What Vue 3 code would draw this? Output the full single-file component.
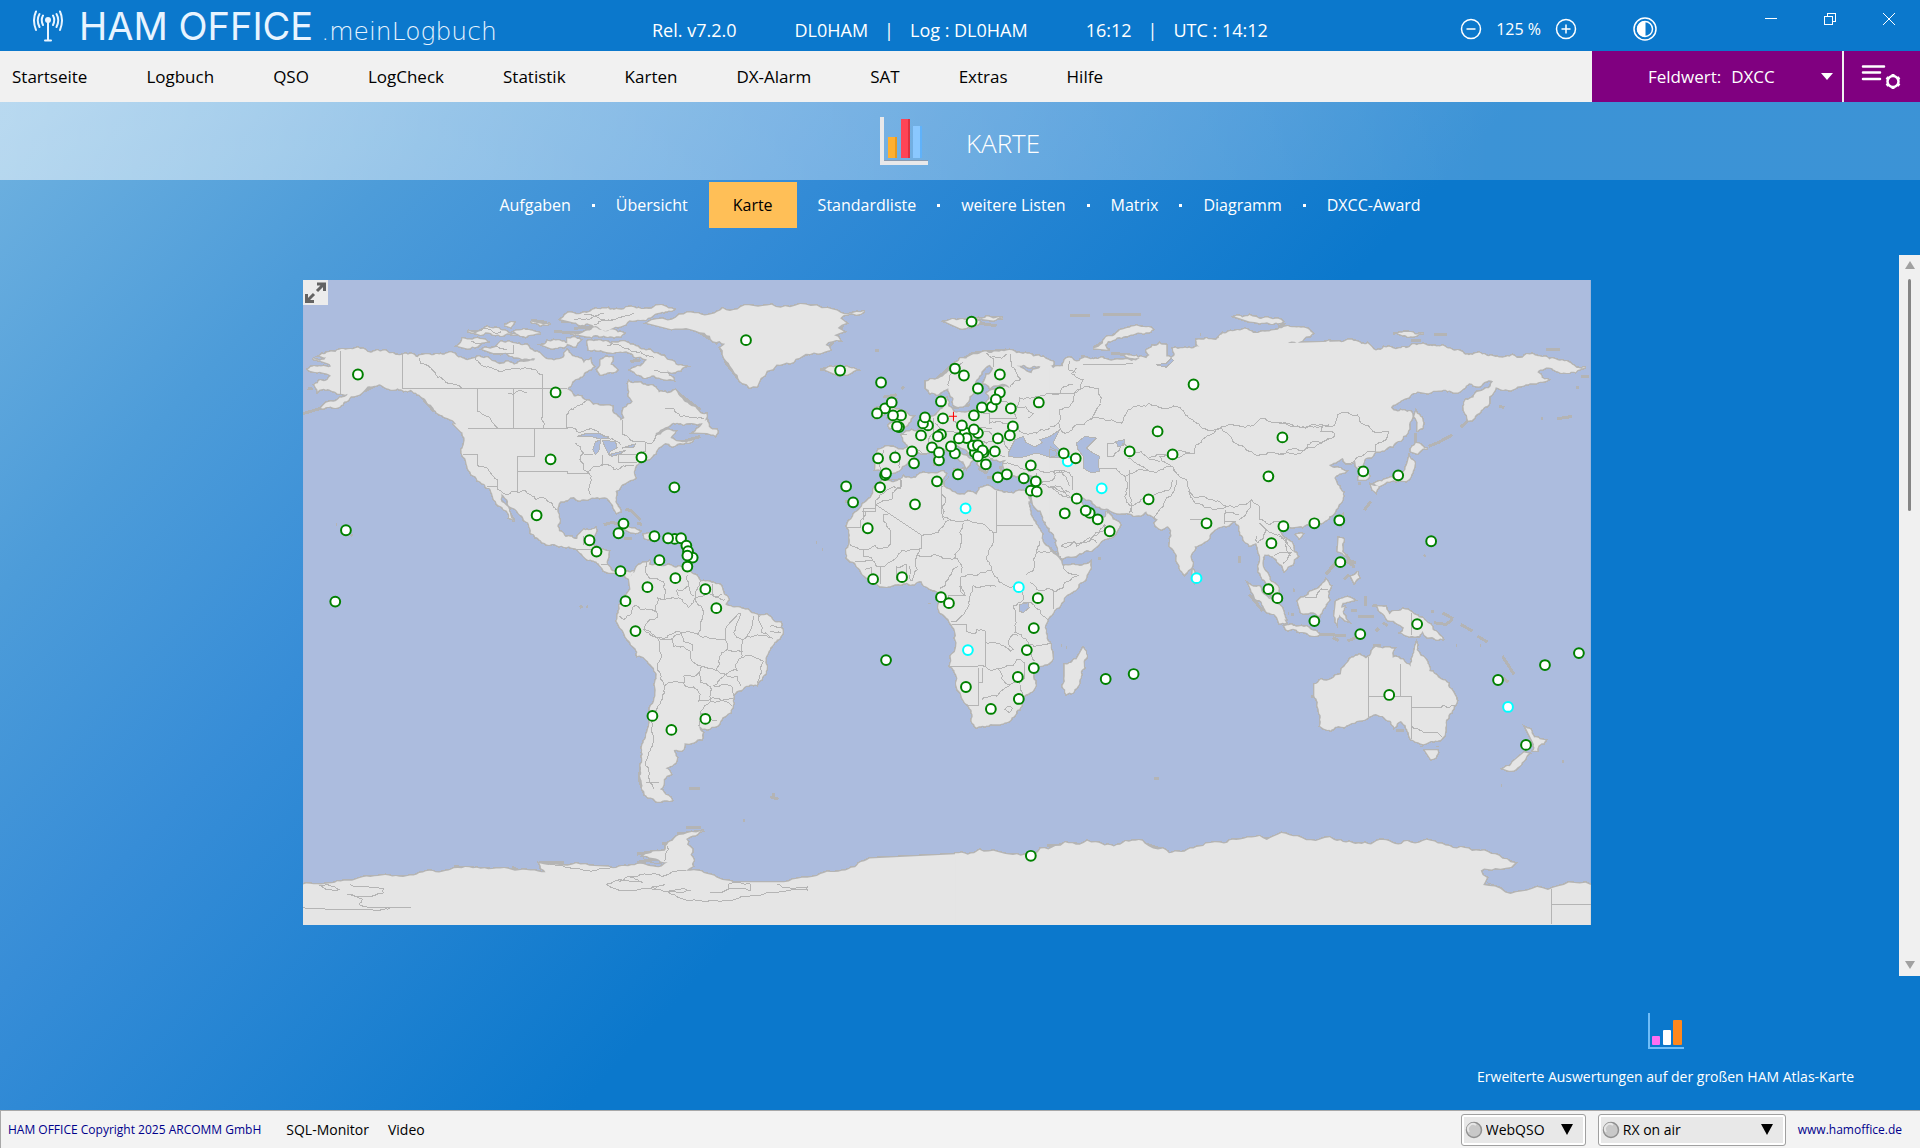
<template>
  <div class="app">
    <header class="titlebar">
      <div class="brand">
        <svg class="brand-icon" width="30" height="32" viewBox="0 0 30 32" fill="none" stroke="#e8f4ff" stroke-width="2" stroke-linecap="round">
          <circle cx="15" cy="10" r="3" fill="#e8f4ff" stroke="none"/>
          <path d="M15 12V30M12 30.500H18"/>
          <path d="M10 5.500Q7.500 10 10 15M20 5.500Q22.500 10 20 15M6.500 4Q3 10 6.500 17M23.500 4Q27 10 23.500 17M3 1.500Q-1 10 3 20M27 1.500Q31 10 27 20"/>
        </svg>
        <span class="brand-name">HAM OFFICE</span>
        <span class="brand-sub">.meinLogbuch</span>
      </div>
      <div class="info">
        <span>Rel. v7.2.0</span>
        <span class="info-group"><span>DL0HAM</span><span>|</span><span>Log : DL0HAM</span></span>
        <span class="info-group"><span>16:12</span><span>|</span><span>UTC : 14:12</span></span>
      </div>
      <div class="zoom">
        <button class="icon-btn" aria-label="Verkleinern">
          <svg width="22" height="22" viewBox="0 0 22 22" fill="none" stroke="#fff" stroke-width="1.500"><circle cx="11" cy="11" r="9.500"/><path d="M6.500 11H15.500"/></svg>
        </button>
        <span>125 %</span>
        <button class="icon-btn" aria-label="Vergrößern">
          <svg width="22" height="22" viewBox="0 0 22 22" fill="none" stroke="#fff" stroke-width="1.500"><circle cx="11" cy="11" r="9.500"/><path d="M6.500 11H15.500M11 6.500V15.500"/></svg>
        </button>
      </div>
      <button class="icon-btn contrast" aria-label="Kontrast">
        <svg width="24" height="24" viewBox="0 0 24 24" fill="none" stroke="#fff"><circle cx="12" cy="12" r="11" stroke-width="1.500"/><circle cx="12" cy="12" r="7.500" stroke-width="1.500"/><path d="M12 4.500A7.500 7.500 0 0 0 12 19.500Z" fill="#fff"/></svg>
      </button>
      <div class="window-buttons">
        <button class="icon-btn" aria-label="Minimieren">
          <svg width="14" height="14" viewBox="0 0 14 14" stroke="#fff" shape-rendering="crispEdges"><path d="M1 6.500H13"/></svg>
        </button>
        <button class="icon-btn" aria-label="Wiederherstellen">
          <svg width="14" height="14" viewBox="0 0 14 14" fill="none" stroke="#fff" shape-rendering="crispEdges"><path d="M1.500 4.500H9.500V12.500H1.500ZM4.500 4.500V1.500H12.500V9.500H9.500"/></svg>
        </button>
        <button class="icon-btn" aria-label="Schließen">
          <svg width="14" height="14" viewBox="0 0 14 14" fill="none" stroke="#fff"><path d="M1 1L13 13M13 1L1 13"/></svg>
        </button>
      </div>
    </header>

    <div class="menubar">
      <nav class="menu">
        <a v-for="item in menu" :key="item" href="#">{{ item }}</a>
      </nav>
      <div class="field">
        <label for="feldwert">Feldwert:</label>
        <select id="feldwert"><option>DXCC</option></select>
        <svg class="field-arrow" width="12" height="7" viewBox="0 0 12 7"><path d="M0 0H12L6 7Z" fill="#fff"/></svg>
      </div>
      <button class="settings" aria-label="Einstellungen">
        <svg width="42" height="28" viewBox="0 0 42 28" fill="none" stroke="#fff">
          <path d="M2 3.500H23M2 9.500H19M2 16H19" stroke-width="2.500" stroke-linecap="round"/>
          <circle cx="32" cy="18.500" r="5.500" stroke-width="2.500"/>
          <path d="M32 11V13M32 24V26M25.500 14.500L27 15.500M38.500 14.500L37 15.500M25.500 22.500L27 21.500M38.500 22.500L37 21.500" stroke-width="3"/>
        </svg>
      </button>
    </div>

    <main class="page">
      <div class="heading">
        <svg width="48" height="48" viewBox="0 0 48 48">
          <path d="M0 0H4V44H48V48H0Z" fill="#e8e8ea"/>
          <path d="M4 43.500H48" stroke="#8a9bb0"/>
          <rect x="8" y="20" width="9" height="21" fill="#ffb031"/>
          <rect x="15" y="20" width="2" height="21" fill="#e8991f"/>
          <rect x="21" y="2" width="9" height="39" fill="#ff4456"/>
          <rect x="28" y="2" width="2" height="39" fill="#e0303f"/>
          <rect x="33" y="9" width="9" height="32" fill="#8ac8ff"/>
          <rect x="40" y="9" width="2" height="32" fill="#5fb2fb"/>
        </svg>
        <h1>KARTE</h1>
      </div>

      <nav class="tabs">
        <template v-for="(tab, i) in tabs" :key="tab">
          <span v-if="i > 0 && tab !== activeTab && tabs[i - 1] !== activeTab" class="dot"></span>
          <a href="#" class="tab" :class="{ active: tab === activeTab }" @click.prevent="activeTab = tab">{{ tab }}</a>
        </template>
      </nav>

      <div class="viewport">
        <div class="content">
          <div class="map">
            <svg class="world" viewBox="0 0 1290 646" role="img" aria-label="Weltkarte">
              <rect width="1290" height="646" class="sea"/>
              <g v-for="(t, i) in shapes" :key="'c' + i" :transform="place(t)">
                <path class="coast" :d="t.land"/>
                <path v-if="t.isles" class="isles" :d="t.isles"/>
              </g>
              <g v-for="(t, i) in shapes" :key="'l' + i" :transform="place(t)">
                <path class="land" :d="t.land"/>
              </g>
              <g v-for="(t, i) in shapes" :key="'b' + i" :transform="place(t)">
                <path v-if="t.lakes" class="lake" :d="t.lakes"/>
                <path v-if="t.borders" class="border" :d="t.borders"/>
              </g>
              <path class="home" d="M647 136.500H655M651.500 132V141"/>
              <circle
                v-for="(m, i) in markers"
                :key="'m' + i"
                class="marker"
                :class="{ open: m.open }"
                :cx="m.x"
                :cy="m.y"
                r="4.900"
              />
            </svg>
            <button class="expand" aria-label="Vollbild">
              <svg width="25" height="25" viewBox="0 0 25 25" fill="none" stroke="#636363" stroke-width="3"><path d="M14 11L21 4M14 4H21.500V11M11 14L4 21M3.500 14V21.500H11"/></svg>
            </button>
          </div>
        </div>
        <div class="scrollbar">
          <svg width="10" height="8" viewBox="0 0 10 8"><path d="M5 0L10 8H0Z" fill="#a0a0a0"/></svg>
          <div class="track"><div class="thumb"></div></div>
          <svg width="10" height="8" viewBox="0 0 10 8"><path d="M0 0H10L5 8Z" fill="#a0a0a0"/></svg>
        </div>
      </div>

      <div class="atlas">
        <button class="atlas-btn">
          <svg width="36" height="36" viewBox="0 0 36 36">
            <path d="M1 0V35H36" fill="none" stroke="#6fbdf8" stroke-width="2"/>
            <rect x="4" y="23" width="8" height="9" rx="1" fill="#ff6ef2"/>
            <rect x="15" y="17" width="8" height="15" rx="1" fill="#fff"/>
            <rect x="25" y="7" width="9" height="25" rx="1" fill="#ff871c"/>
          </svg>
          <span>Erweiterte Auswertungen auf der großen HAM Atlas-Karte</span>
        </button>
      </div>
    </main>

    <footer class="statusbar">
      <span class="copyright">HAM OFFICE Copyright 2025 ARCOMM GmbH</span>
      <a href="#">SQL-Monitor</a>
      <a href="#">Video</a>
      <div class="status-right">
        <label v-for="box in statusBoxes" :key="box.name" class="status-box" :class="box.size">
          <svg width="18" height="18" viewBox="0 0 18 18"><circle cx="9" cy="9" r="7.500" fill="#c8c8c8" stroke="#8f8f8f" stroke-width="1.500"/><path d="M4 11A5 5 0 0 1 11 4" stroke="#e6e6e6" stroke-width="2" fill="none"/></svg>
          <select :aria-label="box.name"><option>{{ box.name }}</option></select>
          <svg class="status-arrow" width="12" height="11" viewBox="0 0 12 11"><path d="M0 0H12L6 11Z"/></svg>
        </label>
        <a class="site" href="#">www.hamoffice.de</a>
      </div>
    </footer>
  </div>
</template>

<script setup>
import { computed, ref } from 'vue'

const menu = ['Startseite', 'Logbuch', 'QSO', 'LogCheck', 'Statistik', 'Karten', 'DX-Alarm', 'SAT', 'Extras', 'Hilfe']
const tabs = ['Aufgaben', 'Übersicht', 'Karte', 'Standardliste', 'weitere Listen', 'Matrix', 'Diagramm', 'DXCC-Award']
const activeTab = ref('Karte')
const statusBoxes = [
  { name: 'WebQSO', size: 'small' },
  { name: 'RX on air', size: 'large' }
]

// Each tile has its own origin (x, y) on the map and its own scale
const tiles = [
  {
    // North America
    x: -2, y: -10, sx: 1 / 3, sy: 1 / 3,
    land: 'M35 265L70 270L75 262L55 258L90 245L140 238L200 246L270 250L350 262L365 255L400 255L440 250L520 265L560 262L590 280L640 285L680 275L700 272L730 262L760 272L790 262L800 240L830 262L850 280L870 268L880 290L850 310L815 335L800 358L820 380L860 392L900 408L935 410L940 432L960 452L972 445L970 415L997 395L985 360L985 335L1020 338L1060 350L1075 368L1100 370L1125 360L1145 385L1180 410L1218 432L1215 450L1150 465L1110 465L1080 480L1060 505L1100 480L1125 485L1110 505L1135 515L1180 510L1115 530L1095 520L1070 540L1055 560L1040 570L1005 590L1000 610L1005 625L975 640L945 665L945 685L960 725L948 730L932 700L920 685L890 682L860 690L820 682L780 695L770 725L770 770L775 785L795 802L830 808L850 780L885 775L885 790L870 820L895 838L925 845L920 885L935 905L960 912L1000 905L990 928L955 915L925 910L900 890L870 870L830 840L805 830L775 830L720 812L690 790L685 765L650 725L620 690L600 665L625 720L642 755L625 745L600 710L580 690L565 655L530 632L500 590L487 560L490 520L485 490L500 490L470 470L440 445L400 420L370 385L330 360L290 355L240 345L200 350L175 375L130 395L60 415L110 390L140 372L110 372L75 360L50 365L40 345L80 330L90 318L35 305L20 298L60 290L90 290L80 280ZM545 238L600 215L640 220L680 225L700 245L730 262L690 268L640 262L620 250L580 250ZM470 228L485 205L545 208L560 215L530 230L500 236ZM725 225L760 210L800 220L790 232L750 235ZM860 215L900 212L960 215L1000 225L1050 240L1100 270L1155 290L1140 302L1100 300L1120 330L1080 325L1010 315L990 300L1020 290L1040 270L1000 260L960 245L900 240L865 240ZM780 148L820 130L870 125L940 120L1000 112L1060 112L1120 118L1080 128L1020 150L960 170L900 178L860 160L820 158ZM810 190L900 180L970 190L960 200L860 200ZM500 182L560 170L650 190L600 198L540 195ZM610 165L640 158L630 172ZM690 155L750 160L740 165ZM640 185L680 180L720 190L660 198ZM800 205L840 210L825 230L800 222ZM890 300L900 270L935 262L930 285L950 300L920 308L900 315ZM1180 488L1200 470L1220 450L1225 470L1250 480L1245 498L1220 490ZM455 460L500 480L505 495L480 485Z',
    isles: 'M340 362L375 372L425 412L460 450L500 490M350 368L400 425M780 155L900 150L1000 135M820 175L900 170M500 185L600 180M690 150L740 158M760 185L960 195M990 275L1020 270M5 432L110 400M20 355L35 358M1115 525L1200 500M570 665L640 750M165 375L230 345M1120 360L1200 420M105 766h4M150 795l5 4',
    lakes: 'M830 500L860 490L900 492L925 505L900 508L870 500ZM885 515L900 512L895 545L885 555L877 540ZM905 512L945 515L950 535L930 545L925 555L915 535ZM925 555L975 542L960 552L935 560ZM965 535L1005 522L1000 532Z',
    borders: 'M118 242V372M305 252V357H800M355 265L360 280L385 290L400 305L430 330L460 345L487 357M525 258V270L620 300L725 313V430L730 475M530 358V425L570 448L592 475M637 358V475M622 372L650 364L680 367M503 475H800L840 488L880 480L905 495L940 510L960 525M797 475V437L860 393M965 452V495L1000 515L1055 520L1085 485M703 475V561H650V667M486 553H530V585L590 630V660L650 667L675 662L705 690L730 685L768 722M560 652H590M650 604H802V610H862M825 520L850 550L838 570L850 600L872 630L870 675M862 605L885 590L905 585L940 600L965 590L1000 588M907 555V590M850 555H877M955 580V553H1010L1035 545V520M955 577H1010M637 225V250H565M1095 415H1120L1140 440L1210 445M848 800V825M830 840H870M900 885H925M820 150L880 140L940 150L1000 130M850 135L910 130M880 165L950 145M570 232L620 240M510 215L540 222M920 228L980 235L1060 262M1060 300L1110 312M520 188L600 186',
    markers: [[171, 314], [765, 368], [750, 569], [1023, 563], [1122, 653], [708, 737], [135, 782]]
  },
  {
    // Greenland
    x: -302, y: -280, sx: 1920 / 1568, sy: 1148 / 938,
    land: 'M528 264L536 261L545 262L558 257L570 256L590 252L602 253L615 250L630 249L645 251L662 250L680 253L706 254L692 257L686 260L691 264L684 268L689 271L681 274L686 278L674 282L678 286L668 289L655 291L645 297L634 298L626 303L621 309L618 316L612 317L606 313L600 305L596 299L593 295L588 284L592 281L582 279L575 272L560 268L548 269Z',
    isles: 'M588 284L593 297L603 310L614 317M690 262L684 274L676 285L650 292M565 268L586 281',
    markers: [[609, 278], [273, 492]]
  },
  {
    // South America
    x: 238, y: 220, sx: 1 / 3, sy: 1 / 3,
    land: 'M265 235L285 210L300 195L330 182L325 195L345 195L370 200L405 205L440 210L460 225L480 245L520 250L545 265L565 300L555 315L600 325L640 342L680 345L700 365L722 370L727 390L710 420L685 455L680 500L665 540L650 557L610 565L580 590L577 620L555 650L530 680L500 690L475 680L488 700L485 720L460 730L432 732L430 750L400 752L410 775L395 800L375 808L392 825L370 840L358 870L370 880L395 903L365 905L330 895L305 870L298 830L305 790L305 740L320 700L330 650L345 590L347 520L330 495L290 470L270 430L245 390L228 365L235 340L250 300L270 270ZM240 82L265 84L298 95L270 98ZM310 105L355 108L350 116L312 115Z',
    isles: 'M190 76L215 68L240 76M252 118h22M255 28L275 35L300 60M290 70L305 75M445 868H478M690 893L715 900M118 318l6 8M138 320l4 3M302 790L296 840L312 885L370 908M310 800L304 850L340 895M828 128h3M846 151h3',
    borders: 'M320 187L315 210L325 235L370 245L375 280L375 300L352 295L350 340L320 330L285 318L250 360L238 350M350 340V355L320 370L310 390L350 415L358 430L360 480L350 510L360 540L372 560L365 600L350 625L335 700L325 760L325 830L340 870M310 390L380 415L425 400L475 405L480 370L490 340L470 310L465 295L445 325L430 310L415 295L375 300M440 225L445 260L410 270L415 290M445 260L460 290M480 245L470 270L465 295L530 295L555 300M515 255L520 290L545 285M475 405L480 412L555 418L600 340M555 418L560 450L530 512L485 500L455 485L450 455L400 440L398 415L425 400M350 415L398 415M455 455V435L430 425L425 400M372 560L385 550L430 552L430 530L475 520L480 550L515 570L510 600L475 605L480 585L430 555M485 500L478 520M530 512L555 525L590 512L595 480L625 468L670 485L665 520L650 550M555 525L520 560L575 562L578 590M555 525L590 530L600 560M560 450L605 455L605 420L640 410L690 415M605 455L600 480M600 340L580 400L605 420M640 350L635 385L610 420M655 345L665 400L700 420M690 380L722 385M690 395L722 400M510 600L578 598M475 680L480 640L510 605L550 605L575 620M480 640L530 665M318 850H355',
    markers: [
      [249, 72], [234, 101], [147, 122], [168, 156], [240, 215], [342, 110], [403, 118], [383, 116], [422, 116],
      [438, 138], [443, 155], [457, 174], [441, 168], [357, 182], [441, 201], [405, 236], [321, 263], [255, 305],
      [495, 269], [528, 326], [285, 395], [336, 650], [393, 692], [495, 659]
    ]
  },
  {
    // Europe
    x: 518, y: 10, sx: 1 / 3, sy: 1 / 3,
    land: 'M318 275L345 270L380 250L400 225L420 205L455 195L500 185L560 182L590 190L640 200L700 215L700 225L650 230L610 225L590 228L620 245L635 250L640 240L670 225L700 235L730 230L740 205L770 215L840 205V620H640L635 600L640 560L620 555L590 560L560 550L550 520L560 510L540 515L500 500L510 530L500 545L480 530L465 500L440 480L410 465L400 455L395 465L420 490L460 510L450 520L440 535L430 515L400 495L370 475L345 480L320 490L295 485L285 495L265 515L240 540L200 550L165 540L175 480L190 475L250 480L265 470L245 435L260 425L290 425L310 400L340 380L370 355V330L380 325L385 350L400 365L440 368L480 360L500 340L510 325L500 310L520 300L570 295L560 285L510 295L490 280L500 255L520 235L510 225L490 240L475 265L465 280L460 310L445 335L420 350L400 345L390 310L385 295L350 315L330 310L318 295ZM15 240L40 232L70 232L110 240L90 250L50 255ZM375 95L420 88L450 85L480 95L470 105L420 115ZM470 85L550 85L520 92ZM205 325L225 330L215 345L235 360L260 370L278 380L270 395L255 410L210 415L205 408L225 395L205 385L220 365L200 350ZM160 360L195 355L190 375L165 385ZM400 540L430 537L425 548ZM345 500H358L355 525H345ZM350 480L356 478V495H350ZM595 558L615 553L605 562Z',
    isles: 'M345 272L400 222L460 190L560 180M318 280L320 300M375 95L480 85L550 82M480 100L530 108M0 240L20 235M190 322L230 315M245 298l8 -8M165 181H178M750 77H810M825 170h12M500 562H530M400 355L450 345M540 530L550 555M475 535L500 550M445 480L475 515M75 635H85M785 203h20',
    lakes: 'M565 490L585 450L610 440L618 458L645 472L668 458L660 450L690 440L720 420L700 460L720 480L735 500L700 505L650 490L600 505L565 500Z',
    borders: 'M500 190L520 205V232M570 192L575 230L602 268L570 292M515 200L545 205L560 192M430 215L400 240L385 290M590 350L600 325L690 310L720 312L735 290L760 285M750 215L745 240L770 250M540 330L565 340L580 355L590 385H510M480 365L510 370V400L580 405M590 350L640 370L625 385M590 410L600 425L650 430L690 415M400 368V395L425 405L460 420L515 415M340 385V430L325 460L345 478M345 400L370 430M370 430L440 435L500 425L525 440M265 475L320 490M190 482L185 545M225 480L240 535M245 435H260M430 455L500 460L555 455L565 480M440 490L500 500L540 495L555 500M550 520L650 540L700 545L740 545M690 470L730 490M740 500L760 520L780 515M530 605V690M185 570H240V592L165 635M165 635V658H130V690M365 590V650L370 690M385 560L365 590M650 550V590L700 570L705 545M690 590L750 620',
    markers: [
      [455, 95], [60, 242], [183, 278], [405, 236], [432, 257], [474, 296], [540, 254], [363, 335], [195, 356],
      [215, 338], [171, 371], [243, 377], [219, 377], [237, 412], [231, 410], [540, 308], [516, 351], [528, 329],
      [486, 353], [573, 356], [657, 338], [462, 377], [369, 386], [324, 407], [309, 401], [315, 383], [303, 437],
      [363, 434], [354, 440], [435, 428], [440, 445], [426, 407], [417, 446], [474, 430], [462, 419], [579, 410],
      [570, 437], [534, 446], [336, 473], [357, 512], [357, 488], [405, 491], [393, 470], [276, 485], [282, 521],
      [225, 503], [174, 506], [195, 556], [198, 551], [180, 593], [78, 590], [99, 638], [351, 575], [414, 554],
      [285, 644], [437, 656, 1], [465, 488], [459, 468], [474, 466], [491, 488], [488, 482], [474, 500],
      [525, 485], [498, 524], [534, 563], [561, 554], [633, 527], [612, 566], [648, 575], [633, 603], [651, 606],
      [744, 515, 1], [732, 491], [768, 506]
    ]
  },
  {
    // Africa and Arabia
    x: 538, y: 190, sx: 1 / 3, sy: 1 / 3,
    land: 'M130 25L150 35L190 20L260 10L310 5L318 12L305 30L310 50L330 60L360 75L410 75L420 55L450 50L480 65L520 72L555 65L565 75L570 95L552 85L580 150L600 180L608 215L630 240L660 270L670 290L700 285L752 278L745 310L710 360L660 410L630 440L620 460L630 520L638 560L635 575L600 590L580 610L582 660L550 680L545 710L515 745L480 765L410 775L395 755L395 730L375 700L362 670L350 620L330 590L332 560L350 520L335 465L300 430L298 400L300 370L265 355L245 335L200 340L120 350L80 325L60 300L45 280L20 265L18 240L28 225L20 170L40 135L80 95L100 70L105 50L125 35ZM575 80L580 50L590 0H690L700 70L715 90L740 130L770 145L800 140V125L815 150L842 165L820 200L780 220L720 250L665 267L650 225L610 150L580 105ZM730 535L742 560L720 630L700 670L680 675L668 650L675 620V585L710 570Z',
    isles: 'M775 267h10M270 400v3M665 528h3M678 534h3M22 265H45M630 235L660 265',
    lakes: 'M540 405L565 400L568 415L550 430L540 425Z',
    borders: 'M65 125H107V93M107 105L185 50V30M20 175H62V152L75 137V125M130 135L142 235L70 240M130 135H145M107 105L245 197L330 150L305 130L308 50M330 150L370 155L460 190V220L440 265L455 300L490 345L540 350M470 68V188H460M470 168H580M245 197V238L185 243L145 280L110 292L95 265L70 260V240L30 225M370 160L365 220L345 255L365 310M230 258L280 255L355 265M240 240L230 258L232 300L215 335M355 290L325 330L300 360M455 300L410 318L365 320L360 350L375 378H325V390M360 345L375 375M470 350L400 348L390 390L380 420L350 455H332M337 465H380V485L410 490V480L437 485V590M330 590H415L490 595L530 570L555 580M437 520L500 535L512 545L520 540L505 515L520 495L535 500M415 597V710H380M415 640H427V597M427 690L470 680L510 645L475 600M510 645L540 640L550 680M555 580V625L535 640M535 350L550 390L520 410L525 490L560 510L570 550L585 575M570 340L590 360L650 365L715 318L670 290M560 315L590 250L650 245L665 270M640 365V420M550 400H575L625 450M565 525L635 520M600 215L590 250M170 330V292L200 285V335M210 290L215 335M120 292V345M45 275L100 275M75 300L95 295V320M495 720L505 710L517 716L509 730ZM665 230L700 220L750 205L770 220M760 200L800 165M590 40L660 75L700 80M660 0L690 50M870 0V80L880 130',
    markers: [
      [83, 176], [99, 329], [186, 323], [303, 383], [327, 401], [594, 386], [537, 353, 1], [582, 476], [561, 542],
      [384, 542, 1], [582, 596], [534, 623], [378, 653], [453, 719], [537, 689], [138, 572], [798, 629],
      [882, 614], [675, 131], [711, 87], [750, 130], [738, 123], [774, 149], [810, 185], [786, 56, 1]
    ]
  },
  {
    // Central and southern Asia
    x: 748, y: 10, sx: 1 / 3, sy: 1 / 3,
    land: 'M0 235L40 230L50 210L100 215L150 205L220 210L270 205L225 195L290 205L300 195L290 180L330 160L350 165V200L365 205L375 190L370 175L400 175L450 170L440 150L500 150L530 130L640 125L690 115L790 130L770 140L710 158L840 152V680L800 700L760 712L730 705L700 705L690 725L730 765L745 800L730 825L705 845L700 830L670 800L645 795L640 830L660 870L685 890L690 920L675 925L650 890L635 860L632 800L620 760L600 768L585 755L570 710L555 695L530 710L510 712L480 745L435 770L430 820L405 855L390 835L360 770L355 710L335 720L315 700L325 690L290 665L240 672L180 662L140 650L110 630L85 610L95 640L110 670L140 685L165 685L175 670L190 695L210 705L190 735L150 760L90 790L35 807L20 750L0 725ZM130 175L160 160L200 130L310 118L240 135L190 150L165 165L180 180ZM555 80L600 75L640 85L700 95L660 100L600 95ZM430 840L445 870L435 880L428 860ZM597 883L630 890L665 930L700 965L710 990H690L660 970L635 935L605 900Z',
    isles: 'M60 77H120M160 75H275M95 200h12M450 133h4M145 807h10M570 798V820M600 915L640 965M130 175L200 130L310 118M640 98L705 97M185 190L240 195M715 973h4M730 900h5',
    lakes: 'M80 460L105 440L140 445L125 460L110 475L130 490L150 500L145 520L150 545L125 550L100 535V500L85 480ZM198 455L225 450L222 468L205 470ZM320 225L350 220L365 205L372 212L350 232ZM0 480L18 482L20 498L0 503Z',
    borders: 'M0 310H75L105 290L145 295L155 325L140 360L120 390L215 400L235 360L320 348L400 362L430 390L510 415L440 465L435 490L375 485L330 500L350 520L380 550L420 600L440 625L530 650L570 645L605 630L630 650V690L660 705L700 700M510 415L550 405L620 400L640 385L700 400L770 412L840 405M510 415L550 455L600 485L700 495L760 485L840 445M172 500V460L200 455M172 500H190L220 460L240 480L300 510L330 515M300 505L345 495L375 505L430 490M235 505L300 545L340 540L370 530L380 550M300 545L270 540L225 560M370 570L360 600L310 625L240 650M190 535H150M190 535L225 560L230 600L225 620L245 650L240 670M380 570L375 600L345 635L330 660L315 690M80 235L65 250L100 270L90 300L75 310M75 310L60 350L30 360L25 400L45 430L120 390M100 225L250 222M0 410L25 400M420 600L435 640L500 660L525 655L530 650M530 660L525 700L560 695M530 670L570 675M605 630L570 690M620 740L625 760L650 720L690 735L710 780L725 800M650 720L630 700M675 800L690 790H725L700 825M0 545L60 550L70 600M0 590L60 610M35 770L75 755L80 770L130 740L165 705M420 690H470',
    markers: [
      [432, 284], [324, 425], [240, 485], [369, 494], [699, 443], [657, 560], [297, 629], [471, 701], [702, 710],
      [795, 701], [666, 761], [657, 899], [684, 926], [441, 866, 1]
    ]
  },
  {
    // Siberia, China and Japan
    x: 978, y: 20, sx: 1 / 3, sy: 1 / 3,
    land: 'M0 85L100 98L60 115L10 130L180 125L230 123L265 130L290 152L340 145L380 145L400 133L450 138L520 150L600 158L620 165L700 165L760 162L830 178L880 195L920 202L890 217L820 205L775 217L808 240L760 250L710 265L650 262L630 290V310L600 340L568 363L553 320L560 300L600 275L650 243L600 260L570 250L530 278L480 272L415 275L370 300L335 323L355 335L395 335L400 350L385 400L340 440L315 452L290 455L255 480L250 495L270 530L260 540H238L245 520L230 500L228 485L200 490L190 475L145 495L165 505L200 515L165 535L180 560L190 600L165 640L120 665L60 680L0 685ZM410 335L420 345L430 385L415 395V375L405 350ZM395 455L410 430L445 447L415 462ZM390 470L405 485L395 530L350 545L300 560L285 552L330 535L375 515L385 490ZM275 555L298 560L290 578L280 570ZM50 705L70 703L60 716ZM175 650L190 645L185 675ZM178 715L193 718L188 755L200 770L175 755ZM215 830L235 815L240 835L225 850ZM355 100L380 96L435 100L410 108L370 106Z',
    isles: 'M448 440L480 427L520 405M545 382L565 365M800 149H843M465 105H503M395 122H425M340 100h6M255 632L275 605M140 825L170 790M200 765L225 805M195 840L210 825M215 785L230 790M660 318L675 324M785 355h8M835 357L880 350M905 231H930M890 264h10M410 400V428M235 553h10M435 770l4 -4M0 65L12 72L0 80',
    borders: 'M0 370L70 383L130 375L165 378L175 345L205 338L235 345L255 375L290 400L328 395L320 420L290 435V455L240 470L195 490M130 380L125 395L165 400V410L85 435L75 450L0 465M235 500H250M0 710L20 720L40 755',
    markers: [[252, 515], [357, 527], [180, 662], [456, 725], [183, 788]]
  },
  {
    // Indonesia, Australia and New Zealand
    x: 978, y: 280, sx: 1 / 3, sy: 1 / 3,
    land: 'M55 125L80 110L110 90L140 60L155 80L145 95L150 120L130 150L120 170L65 160ZM170 125L225 122L190 130L185 145L200 140L190 155L205 185L180 165L172 192L165 170ZM15 200L50 202L110 215L120 225L60 218L20 210ZM-30 110L10 150L20 190L0 192ZM295 140L320 142L325 155L330 165L345 155L370 148L400 160L440 185L460 210L495 243L470 240L430 215L420 230L400 230L365 220L375 205L350 190L320 175L300 155ZM105 375L125 360L185 345L200 315L240 285L260 297L272 290L290 262L345 268L340 295L395 322L402 290L412 250L425 290L440 300L450 335L485 360L520 395L530 435L500 500L490 535L455 545L395 540L385 515L365 485L345 505L320 480L270 472L210 495L145 512L122 500L118 450L105 410ZM437 573H475L470 595L455 600ZM740 505L765 535L800 543L775 575L762 575L765 555ZM735 580L750 583L715 625L690 635L672 628L705 605Z',
    isles: 'M120 225L200 228M205 245L240 230M160 235l18 8M465 190L500 195L520 180M490 160L522 178M545 195L580 215M595 230L625 248M670 290L705 345M670 355L688 368M260 110V140M235 170H285M280 137L300 142M310 190l15 8M290 215l8 -8M215 152h18M35 165h8M280 258h25M740 505L760 530M455 157h10M530 258h3M603 259h3M850 606h6M665 680h4M350 515H375M95 412h8M428 560v4M200 5L225 20M140 42L165 15M195 318h15M475 560v4M42 92h4',
    borders: 'M78 115H110L125 88L145 90M397 162V228M268 292V472M268 412H397V540M364 315V412M397 445H480L490 440L530 438M397 500L435 520H475L490 532',
    markers: [[105, 185], [243, 224], [414, 194], [330, 407], [657, 362], [798, 317], [900, 281], [687, 443, 1], [741, 557]]
  },
  {
    // Antarctica, west
    x: -302, y: 540, sx: 960 / 1568, sy: 1 / 3,
    land: 'M480 197H493L540 193L560 185L610 172L700 155L740 148L840 155L890 160L880 133L940 133L1000 148L1040 135L1075 145L1090 130L1050 110L1085 95L1100 60L1150 35L1120 60L1130 90L1120 155L1210 190H1280L1340 165L1420 118L1568 105V330H480Z',
    isles: 'M1120 25H1145M1105 45L1150 35M1080 75L1110 65M1040 105L1075 95M880 130H920M1040 130L1075 120M1213 5h4M740 143L800 150M835 145L850 158',
    borders: 'M522 200L545 203L552 212L530 210ZM570 197L625 210L625 222L565 225L590 240L585 255L600 265H670M493 265L540 271H605L640 266M1120 155L1080 172L1025 172L1040 182L1050 190L990 195L1035 215L1140 245L1235 230L1318 213L1320 203M1025 172L1010 190M1062 205L1085 197L1070 208ZM1090 218L1115 207L1128 215L1115 220ZM1160 222L1190 210V195L1225 195V215L1160 222M1268 195L1290 207L1320 203M1090 80L1085 125M1050 115L1080 135M890 135L1000 145'
  },
  {
    // Antarctica, east
    x: -302, y: -280, sx: 1920 / 1568, sy: 1148 / 938,
    land: 'M780 698L800 695L815 697L840 700L850 694L862 692L870 689L882 691L895 689L915 691L935 690L942 694L950 694L955 698L965 697L975 694L985 690L1000 690L1010 687L1035 687L1060 684L1075 688L1090 687L1110 690L1130 687L1150 688L1175 690L1200 694L1225 700L1238 706L1222 710L1210 712L1215 718L1212 724L1230 730L1265 728L1300 724V760H780Z',
    isles: 'M943 637h4M630 650h3M855 692L880 690M1020 687L1060 684M935 690L955 697M1205 696L1238 706',
    borders: 'M1268 727V756M1268 740H1300M1215 722L1228 727',
    markers: [[842, 700]]
  }
]

// Breaks one straight piece of coast into a ragged line; long pieces are tile seams and stay straight
const ragged = (x1, y1, x2, y2, limit) => {
  const length = Math.hypot(x2 - x1, y2 - y1)
  if (length < limit || length > 140) {
    return `L${x2.toFixed(1)} ${y2.toFixed(1)}`
  }
  const noise = Math.sin(x1 * 12.9 + y1 * 78.2 + x2 * 37.7 + y2 * 4.1) * 4375.5
  const shift = (noise - Math.floor(noise) - 0.5) * 0.36
  const mx = (x1 + x2) / 2 - (y2 - y1) * shift
  const my = (y1 + y2) / 2 + (x2 - x1) * shift
  return ragged(x1, y1, mx, my, limit) + ragged(mx, my, x2, y2, limit)
}

const roughen = (d, limit) => {
  let x = 0
  let y = 0
  return d.replace(/([MLHVZ])([^MLHVZ]*)/g, (all, command, args) => {
    const n = args.trim().split(' ').map(Number)
    if (command === 'L') {
      const piece = ragged(x, y, n[0], n[1], limit)
      x = n[0]
      y = n[1]
      return piece
    }
    if (command === 'M') {
      x = n[0]
      y = n[1]
    }
    if (command === 'H') x = n[0]
    if (command === 'V') y = n[0]
    return all
  })
}

const shapes = tiles.map((t) => {
  const limit = t.sx > 1 ? 5 : 9
  return {
    ...t,
    land: roughen(t.land, limit),
    borders: t.borders && roughen(t.borders, limit)
  }
})

const place = (t) => `translate(${t.x} ${t.y}) scale(${t.sx} ${t.sy})`

const markers = computed(() => tiles.flatMap((t) => (t.markers || []).map(([x, y, open]) => ({
  x: t.x + x * t.sx,
  y: t.y + y * t.sy,
  open: !!open
}))))
</script>

<style>
body {
  margin: 0;
}
</style>

<style scoped>
.app {
  display: flex;
  flex-direction: column;
  min-height: 100vh;
  font-family: "Open Sans", "Noto Sans", sans-serif;
  font-size: 17px;
  color: #000;
}

.app a {
  color: inherit;
  text-decoration: none;
}

button,
select {
  margin: 0;
  padding: 0;
  border: 0;
  background: none;
  font: inherit;
  color: inherit;
}

svg {
  display: block;
}

.titlebar {
  display: flex;
  align-items: center;
  box-sizing: border-box;
  height: 51px;
  padding: 0 24px 0 33px;
  background: #0b78cc;
  color: #fff;
}

.brand {
  display: flex;
  align-items: baseline;
  width: 619px;
  color: #e8f4ff;
  white-space: nowrap;
}

.brand-icon {
  align-self: center;
  margin-right: 16px;
}

.brand-name {
  font-family: Inter, "DejaVu Sans", sans-serif;
  font-size: 38px;
  font-weight: 400;
  line-height: 50px;
}

.brand-sub {
  margin-left: 8px;
  font-family: "DejaVu Sans", sans-serif;
  font-size: 25px;
  font-weight: 200;
}

.info {
  display: flex;
  gap: 58px;
  padding-top: 8px;
  font-size: 18px;
  white-space: nowrap;
}

.info-group {
  display: flex;
  gap: 16px;
}

.icon-btn {
  display: flex;
  cursor: pointer;
}

.zoom {
  display: flex;
  align-items: center;
  gap: 14px;
  margin-left: auto;
  padding-top: 6px;
  font-size: 16px;
}

.contrast {
  margin-left: 56px;
  padding-top: 6px;
}

.window-buttons {
  display: flex;
  align-self: flex-start;
  gap: 45px;
  margin-left: 107px;
  padding-top: 12px;
}

.menubar {
  display: flex;
  height: 51px;
  background: #f1f1f1;
}

.menu {
  display: flex;
  flex: 1;
  align-items: center;
  gap: 59px;
  padding-left: 12px;
}

.field {
  display: flex;
  align-items: center;
  box-sizing: border-box;
  width: 250px;
  padding: 0 9px 0 56px;
  background: #800080;
  color: #fff;
}

.field select {
  margin-left: 10px;
  appearance: none;
}

.field-arrow {
  margin-left: auto;
}

.settings {
  display: flex;
  align-items: center;
  justify-content: center;
  box-sizing: border-box;
  width: 78px;
  border-left: 2px solid #f1f1f1;
  background: #800080;
}

.page {
  display: flex;
  flex: 1;
  flex-direction: column;
  background: linear-gradient(133deg, #70b2e0 0%, #4d9cd9 16%, #378dd7 29%, #0b78cc 53%);
  color: #fff;
}

.heading {
  display: flex;
  align-items: center;
  justify-content: center;
  gap: 38px;
  height: 78px;
  background: linear-gradient(90deg, rgba(255, 255, 255, 0.51), rgba(255, 255, 255, 0.2) 78%);
}

.heading h1 {
  margin: 4px 0 0;
  font-size: 26px;
  font-weight: 300;
}

.tabs {
  display: flex;
  align-items: center;
  justify-content: center;
  gap: 21px;
  padding: 2px 0;
  font-size: 16px;
  line-height: 46px;
}

.tab.active {
  padding: 0 24px;
  background: #ffbf57;
  color: #000;
}

.dot {
  width: 3px;
  height: 3px;
  background: #fff;
}

.viewport {
  display: flex;
  margin-top: 25px;
}

.content {
  flex: 1;
  padding: 25px 5px 51px 0;
}

.map {
  position: relative;
  width: 68%;
  margin: 0 auto;
}

.world {
  width: 100%;
}

.sea,
.lake {
  fill: #acbcde;
}

.land {
  fill: #e5e5e5;
}

.coast,
.isles,
.lake,
.border {
  stroke: #b4b4b4;
  stroke-width: 1px;
  vector-effect: non-scaling-stroke;
  shape-rendering: crispEdges;
}

.coast,
.isles {
  stroke-width: 3px;
}

.isles,
.border {
  fill: none;
}

.marker {
  fill: #fff;
  stroke: #008000;
  stroke-width: 2px;
}

.marker.open {
  stroke: #00ffff;
}

.home {
  stroke: #ff0000;
}

.expand {
  position: absolute;
  top: 0;
  left: 0;
  background: #ececec;
}

.scrollbar {
  display: flex;
  flex-direction: column;
  align-items: center;
  box-sizing: border-box;
  width: 21px;
  padding: 6px 0 7px;
  background: #f0f0f0;
}

.track {
  flex: 1;
  padding-top: 10px;
}

.thumb {
  width: 3px;
  height: 34%;
  border-radius: 2px;
  background: #858585;
}

.atlas {
  display: flex;
  justify-content: flex-end;
  padding: 37px 66px 20px;
}

.atlas-btn {
  display: flex;
  flex-direction: column;
  align-items: center;
  gap: 18px;
  font-size: 14px;
  line-height: 20px;
}

.statusbar {
  display: flex;
  align-items: center;
  box-sizing: border-box;
  height: 38px;
  padding: 0 18px 0 7px;
  border-top: 1px solid #a8a8a8;
  border-left: 1px solid #a8a8a8;
  background: #f3f3f3;
  font-size: 14px;
  gap: 19px;
}

.copyright {
  margin-right: 6px;
  font-size: 12px;
  color: #00008b;
}

.status-right {
  display: flex;
  align-items: center;
  gap: 12px;
  margin-left: auto;
}

.status-box {
  display: flex;
  align-items: center;
  gap: 3px;
  box-sizing: border-box;
  height: 32px;
  padding: 0 12px 0 3px;
  border: 1px solid #a0a0a0;
  border-radius: 3px;
  background: #e8e8e8;
  box-shadow: inset 0 0 0 2px #fff;
}

.status-box.small {
  width: 125px;
}

.status-box.large {
  width: 188px;
}

.status-box select {
  appearance: none;
}

.status-arrow {
  margin-left: auto;
}

.statusbar .site {
  font-size: 12px;
  color: #00008b;
}
</style>
